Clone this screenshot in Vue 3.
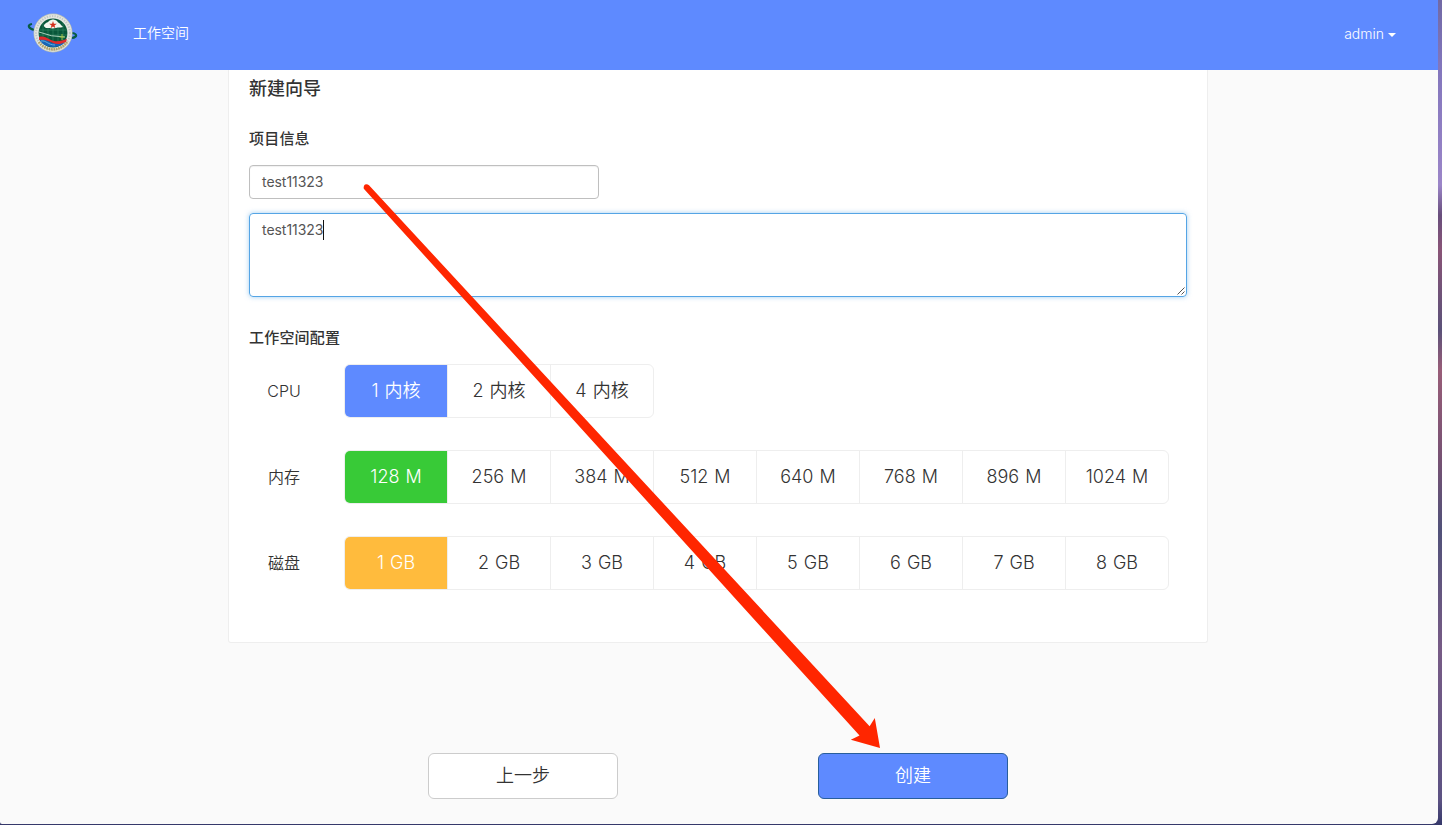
<script setup>
const groups = [
  { label: 'CPU', tone: 'blue', options: ['1 内核', '2 内核', '4 内核'] },
  { label: '内存', tone: 'green', options: ['128 M', '256 M', '384 M', '512 M', '640 M', '768 M', '896 M', '1024 M'] },
  { label: '磁盘', tone: 'amber', options: ['1 GB', '2 GB', '3 GB', '4 GB', '5 GB', '6 GB', '7 GB', '8 GB'] }
]
</script>

<template>
  <div class="desktop">
    <div class="window">
      <header class="topbar">
        <svg class="logo" width="52" height="42" viewBox="0 0 52 42">
          <path d="M5 12C0 13 1 16 7 18M45 21C51 22 50 25 45 26" fill="none" stroke="#075b45" stroke-width="2.2" />
          <circle cx="26" cy="21" r="19.5" fill="#b9c0b5" />
          <circle cx="26" cy="21" r="18.8" fill="#e4e7e2" />
          <circle cx="26" cy="21" r="16.9" fill="none" stroke="#c2c8c3" stroke-width="2" stroke-dasharray="1.4 1.2" />
          <path d="M12 30A17 17 0 0 0 40 30" fill="none" stroke="#b3a263" stroke-width="2.6" stroke-dasharray="1.6 .8" />
          <circle cx="26" cy="21" r="14.4" fill="#08573a" />
          <path d="M12 18h28M12 23h28M16 11v20M21 15v18M26 15v18M31 15v18M36 11v20" stroke="#388665" stroke-width=".6" />
          <path d="M18 12c1-2 3-1 4-3 3-2 5-2 8 0 1 2 3 2 4 4l2 2c-3 1-5 0-7 1-4 1-6 0-10 0-2-1-3-3-1-4Z" fill="#f3f7ef" />
          <path d="m26 9 .9 2.7h2.9l-2.3 1.8.9 2.7-2.4-1.6-2.4 1.6.9-2.7-2.3-1.8h2.9Z" fill="#d42d19" />
          <path d="M12 20q12 5 26 5" stroke="#b8dbc7" stroke-width=".9" fill="none" />
          <path d="M12 27c6-2 10 4 15 4 5 0 8-2 12-3-2 5-7 7-13 7s-12-3-14-8Z" fill="#1764b5" />
          <path d="M12 25c6-2 10 3 15 4 5 1 9-1 13-2l-1 3c-5 2-9 3-13 1-5-2-8-4-14-3Z" fill="#df2b2c" />
          <path d="M14 29c5-1 7 4 14 4" stroke="#63b7e4" fill="none" stroke-width=".9" />
          <path d="M35 22v6M32.5 25h5" stroke="#a8c63d" stroke-width=".9" />
        </svg>
        <nav>工作空间</nav>
        <div class="user"><span>admin</span><i class="caret"></i></div>
      </header>
      <main>
        <section class="card">
          <h1>新建向导</h1>
          <h2>项目信息</h2>
          <div class="field name">test11323</div>
          <div class="field description">
            <span>test11323</span><i class="cursor"></i>
            <svg class="grip" width="8" height="8" viewBox="0 0 8 8"><path d="M.5 7.5l7-7M4.5 7.5l3-3" stroke="#555" stroke-width="1" /></svg>
          </div>
          <h2 class="config">工作空间配置</h2>
          <div v-for="group in groups" :key="group.label" class="row">
            <div class="label">{{ group.label }}</div>
            <div class="options" :class="group.tone">
              <div v-for="(option, i) in group.options" :key="option" class="option" :class="{ selected: i === 0 }">{{ option }}</div>
            </div>
          </div>
        </section>
        <div class="actions">
          <button class="back">上一步</button>
          <button class="create">创建</button>
        </div>
      </main>
    </div>
    <svg class="arrow" width="1442" height="825" viewBox="0 0 1442 825">
      <path d="M363.8 188.7Q363.2 186 365 184.6Q367 183.5 369 185.3L869.6 726.2L874.8 718L880 748L850.8 739.8L859.5 735.5Z" fill="#ff2600" />
    </svg>
  </div>
</template>

<style>
body { margin: 0; overflow: hidden; }
</style>

<style scoped>
* { box-sizing: border-box; }
.desktop {
  position: relative;
  width: 1442px;
  height: 825px;
  overflow: hidden;
  background: linear-gradient(#7169a5 0, #8276bc 65px, #9b85c8 185px, #684e7c 215px, #895477 250px, #5b5179 330px, #985d78 370px, #765173 460px, #515179 530px, #775b86 650px, #5c5283 800px, #35386a 825px);
  font-family: Inter, "Noto Sans CJK SC", sans-serif;
  color: #333;
}
.window { width: 1438px; height: 824px; background: #fafafa; border-radius: 0 0 6px 2px; overflow: hidden; }
.topbar { height: 70px; background: #5e8aff; display: flex; align-items: flex-start; color: #fff; font-size: 14px; font-weight: 350; }
.logo { margin: 12px 0 0 27px; flex: none; }
nav { margin: 22px 0 0 54px; line-height: 21px; }
.user { margin: 24px 42px 0 auto; display: flex; align-items: center; gap: 4px; line-height: 20px; }
.caret { border: 4px solid transparent; border-top-color: #fff; border-bottom: 0; margin-top: 2px; }
.card { width: 980px; height: 573px; margin-left: 228px; padding: 5px 20px 0; background: #fff; border: 1px solid #eee; border-top: 0; border-radius: 0 0 3px 3px; }
h1, h2 { margin: 0; font-weight: 500; }
h1 { font-size: 18px; line-height: 28px; }
h2 { font-size: 15px; line-height: 24px; margin-top: 24px; letter-spacing: .2px; }
.field { border: 1px solid #bfbfbf; border-radius: 4px; font-size: 14px; line-height: 20px; color: #555; padding: 6px 12px; font-weight: 400; }
.name { width: 350px; height: 34px; margin-top: 14px; box-shadow: inset 0 1px 1px #0000000f; }
.description { position: relative; display: flex; align-items: flex-start; height: 84px; margin-top: 14px; border-color: #55a5e5; box-shadow: 0 0 5px #66afe999; }
.description span { width: 61px; }
.field { letter-spacing: -.05px; }
.cursor { width: 1px; height: 20px; background: #111; }
.grip { position: absolute; right: 1px; bottom: 1px; }
.config { margin-top: 29px; }
.row { display: flex; height: 54px; margin-bottom: 32px; align-items: center; }
.config + .row { margin-top: 14px; }
.label { width: 70px; margin-right: 25px; text-align: center; font-size: 16px; line-height: 24px; font-weight: 350; }
.options { display: flex; border: 1px solid #eee; border-radius: 6px; overflow: hidden; }
.option { width: 103px; height: 52px; border-right: 1px solid #eee; text-align: center; font-size: 18px; line-height: 52px; font-weight: 350; word-spacing: 1px; white-space: nowrap; }
.option:last-child { border-right: 0; width: 102px; }
.selected { color: #fff; }
.blue .selected { background: #5e8aff; border-color: #eee; }
.green .selected { background: #38ca37; }
.amber .selected { background: #ffbb3d; }
.actions { display: flex; gap: 200px; margin: 110px 0 0 428px; }
button { width: 190px; height: 46px; border: 1px solid #ccc; border-radius: 6px; padding: 0; background: #fff; color: #333; font: 350 18px/26px Inter, "Noto Sans CJK SC", sans-serif; }
.create { color: #fff; background: #5e8aff; border-color: #285e9c; }
.arrow { position: absolute; inset: 0; pointer-events: none; }
</style>
